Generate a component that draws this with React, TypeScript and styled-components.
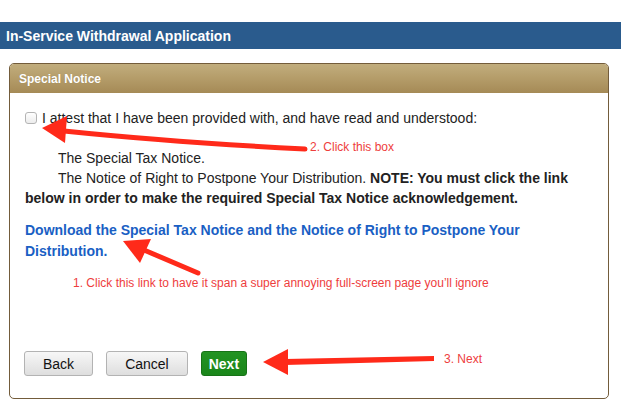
import React from "react";
import styled, { createGlobalStyle } from "styled-components";

const Global = createGlobalStyle`
  html, body { margin: 0; padding: 0; background: #fff; }
  body { font-family: "Liberation Sans", Arial, Helvetica, sans-serif; }
  * { box-sizing: border-box; }
`;

const Page = styled.div`
  position: relative;
  width: 621px;
  height: 406px;
  padding-top: 22px;
  overflow: hidden;
`;

const TitleBar = styled.div`
  height: 27px;
  background: #2a5b8d;
  color: #fff;
  font-weight: bold;
  font-size: 14px;
  padding-left: 6px;
  display: flex;
  align-items: center;
`;

const Panel = styled.section`
  margin: 14px 12px 0 9px;
  height: 336px;
  border: 1px solid #735c3b;
  border-radius: 5px;
  display: flex;
  flex-direction: column;
  overflow: hidden;
`;

const PanelHeader = styled.div`
  height: 29px;
  flex: none;
  background: linear-gradient(to bottom, #c1ad7d 0%, #b49c69 50%, #a58a56 100%);
  color: #fff;
  font-weight: bold;
  font-size: 12px;
  padding-left: 9px;
  display: flex;
  align-items: center;
  text-shadow: 0 0 1px rgba(0, 0, 0, 0.15);
`;

const PanelBody = styled.div`
  flex: 1;
  display: flex;
  flex-direction: column;
  padding: 15px 20px 22px 15px;
  color: #222;
  font-size: 14px;
  line-height: 20px;
`;

const CheckRow = styled.label`
  display: flex;
  align-items: center;
  gap: 5px;
  height: 20px;
`;

const Check = styled.input`
  appearance: none;
  -webkit-appearance: none;
  margin: 0;
  width: 12px;
  height: 12px;
  border: 1px solid #b4b4b4;
  border-radius: 3px;
  background: linear-gradient(to bottom, #ffffff, #ececec);
`;

const Notices = styled.div`
  margin-top: 20px;
`;

const NoticeLine = styled.div<{ $indent: number }>`
  text-indent: ${(p) => p.$indent}px;
`;

const Bold = styled.b`
  font-weight: bold;
`;

const DownloadLink = styled.a`
  margin-top: 12px;
  display: block;
  color: #1a5fc4;
  font-weight: bold;
  line-height: 21px;
  text-decoration: none;
`;

const ButtonRow = styled.div`
  margin-top: auto;
  margin-left: -1px;
  display: flex;
  gap: 13px;
`;

const Button = styled.button<{ $primary?: boolean }>`
  height: 25px;
  margin: 0;
  padding: ${(p) => (p.$primary ? "0 7px" : "0 18px")};
  font-family: "Liberation Sans", Arial, sans-serif;
  font-size: 14px;
  font-weight: ${(p) => (p.$primary ? "bold" : "normal")};
  color: ${(p) => (p.$primary ? "#fff" : "#111")};
  border-radius: 3px;
  border: 1px solid ${(p) => (p.$primary ? "#177317" : "#b3b3b3")};
  background: ${(p) =>
    p.$primary
      ? "linear-gradient(to bottom, #229322, #1a861a)"
      : "linear-gradient(to bottom, #f7f7f7, #dedede)"};
`;

const Overlay = styled.svg`
  position: absolute;
  left: 0;
  top: 0;
  pointer-events: none;
`;

const Note = styled.span<{ $x: number; $y: number }>`
  position: absolute;
  left: ${(p) => p.$x}px;
  top: ${(p) => p.$y}px;
  font-size: 12px;
  line-height: 14px;
  color: #ee3d3d;
  white-space: nowrap;
`;

const RED = "#ff2a1a";

export default function App() {
  return (
    <Page>
      <Global />
      <TitleBar>In-Service Withdrawal Application</TitleBar>
      <Panel>
        <PanelHeader>Special Notice</PanelHeader>
        <PanelBody>
          <CheckRow>
            <Check type="checkbox" />
            I attest that I have been provided with, and have read and understood:
          </CheckRow>
          <Notices>
            <NoticeLine $indent={33}>The Special Tax Notice.</NoticeLine>
            <NoticeLine $indent={33}>
              The Notice of Right to Postpone Your Distribution.{" "}
              <Bold>
                NOTE: You must click the link below in order to make the required Special Tax
                Notice acknowledgement.
              </Bold>
            </NoticeLine>
          </Notices>
          <DownloadLink href="#">
            Download the Special Tax Notice and the Notice of Right to Postpone Your
            Distribution.
          </DownloadLink>
          <ButtonRow>
            <Button>Back</Button>
            <Button>Cancel</Button>
            <Button $primary>Next</Button>
          </ButtonRow>
        </PanelBody>
      </Panel>

      <Overlay width="621" height="406" viewBox="0 0 621 406">
        {/* arrow 2 */}
        <path d="M64 131 Q170 142 305 149" stroke={RED} strokeWidth="5" fill="none" strokeLinecap="round" />
        <polygon points="42,128 67,116 65,143" fill={RED} />
        {/* arrow 1 */}
        <path d="M144 250 L198 273" stroke={RED} strokeWidth="5" fill="none" strokeLinecap="round" />
        <polygon points="123,241 151,239 140,263" fill={RED} />
        {/* arrow 3 */}
        <polygon points="285,359 434,356 434,361 285,365" fill={RED} />
        <polygon points="263,362 288,349 288,375" fill={RED} />
      </Overlay>
      <Note $x={310} $y={140}>2. Click this box</Note>
      <Note $x={73} $y={276}>
        1. Click this link to have it span a super annoying full-screen page you’ll ignore
      </Note>
      <Note $x={444} $y={352}>3. Next</Note>
    </Page>
  );
}
